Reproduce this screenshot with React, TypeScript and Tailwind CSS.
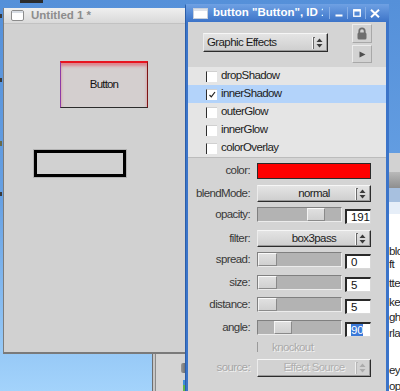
import React from "react";

const UI = "font-['Liberation_Sans',Arial,sans-serif] tracking-[-0.6px]";
const TITLE = "font-['Liberation_Sans',sans-serif] font-bold text-[11.5px] tracking-normal";

function Arrows({ disabled = false }: { disabled?: boolean }) {
  const c = disabled ? "#ababab" : "#3a3a3a";
  return (
    <svg width="15" height="14" viewBox="0 0 15 14" className="shrink-0">
      <line x1="0.5" y1="1" x2="0.5" y2="13" stroke={disabled ? "#f0f0f0" : "#fafafa"} />
      <line x1="1.5" y1="1" x2="1.5" y2="13" stroke={disabled ? "#b8b8b8" : "#6a6a6a"} />
      <line x1="1.5" y1="1.5" x2="3" y2="1.5" stroke={disabled ? "#b8b8b8" : "#6a6a6a"} />
      <path d="M4.5 6 L7.5 2.5 L10.5 6 Z" fill={c} />
      <path d="M4.5 8 L7.5 11.5 L10.5 8 Z" fill={c} />
    </svg>
  );
}

function Combo({
  text,
  className,
  left = false,
  disabled = false,
}: {
  text: string;
  className: string;
  left?: boolean;
  disabled?: boolean;
}) {
  return (
    <div
      className={`flex items-center border border-t-[#f6f6f6] border-l-[#ececec] border-r-[#2c2c2c] border-b-[#2c2c2c] shadow-[inset_-1px_-1px_0_#9a9a9a] ${
        disabled ? "bg-[#d2d2d2]" : "bg-gradient-to-b from-[#e4e4e4] to-[#cecece]"
      } ${className}`}
    >
      {left ? null : <div className="w-[15px] shrink-0" />}
      <div
        className={`flex-1 text-[11.5px] leading-none whitespace-nowrap ${left ? "pl-[3px]" : "text-center"} ${
          disabled ? "text-[#b0b0b0] [text-shadow:1px_1px_0_#f4f4f4]" : "text-[#1c1c1c]"
        }`}
      >
        {text}
      </div>
      <Arrows disabled={disabled} />
    </div>
  );
}

function Slider({ thumb }: { thumb: string }) {
  return (
    <div className="flex w-[85px] h-[15px] bg-[#b3b3b3] border border-t-[#808080] border-l-[#808080] border-r-[#ececec] border-b-[#ececec]">
      <div
        className={`${thumb} h-full bg-gradient-to-b from-[#e0e0e0] to-[#d0d0d0] border border-t-[#fafafa] border-l-[#f4f4f4] border-r-[#8a8a8a] border-b-[#8a8a8a]`}
      />
    </div>
  );
}

function NumBox({ children }: { children: React.ReactNode }) {
  return (
    <div className="mt-[2px] ml-[3px] w-[26px] h-[15px] bg-white border-t-2 border-l-2 border-t-[#2a2a2a] border-l-[#2a2a2a] border-r border-b border-r-[#d8d8d8] border-b-[#d8d8d8] pl-[4px] text-[11.5px] leading-[13px] text-[#111] tracking-[-0.2px]">
      {children}
    </div>
  );
}

function Row({
  label,
  h,
  mt,
  ch,
  disabled = false,
  children,
}: {
  label: string;
  h: string;
  mt: string;
  ch: string;
  disabled?: boolean;
  children: React.ReactNode;
}) {
  return (
    <div className={`flex items-start ${h}`}>
      <div
        className={`w-[62px] ${mt} ${ch} flex items-center justify-end text-[11.5px] leading-none whitespace-nowrap ${
          disabled ? "text-[#a6a6a6] [text-shadow:1px_1px_0_#f2f2f2]" : "text-[#383838]"
        }`}
      >
        {label}
      </div>
      <div className={`ml-[7px] ${mt} flex items-start`}>{children}</div>
    </div>
  );
}

function ListRow({ label, checked = false, selected = false }: { label: string; checked?: boolean; selected?: boolean }) {
  return (
    <div className={`h-[18px] flex items-center ${selected ? "bg-[#b3d3fa]" : ""}`}>
      <div className="ml-[18px] w-[11px] h-[11px] bg-white border-l border-l-[#2e2e2e] border-t border-t-[#d0d0d0] flex items-center justify-center">
        {checked ? (
          <svg width="9" height="9" viewBox="0 0 9 9">
            <path d="M1.5 5 L3.3 6.8 L7 2" fill="none" stroke="#222" strokeWidth="1.2" />
          </svg>
        ) : null}
      </div>
      <div className="ml-[4px] text-[11.5px] leading-none text-[#1c1c1c]">{label}</div>
    </div>
  );
}

export default function App() {
  return (
    <div
      className={`relative w-[400px] h-[391px] overflow-hidden bg-gradient-to-b from-[#5590d9] via-[#66a0e3] to-[#a3d3fb] ${UI}`}
    >
      {/* desktop bits */}
      <div className="absolute left-[20px] top-0 w-[23px] h-[3px] bg-[#2c2c2c]" />
      <div className="absolute left-0 top-[14px] w-[2px] h-[4px] bg-[#3a3a3a]" />
      <div className="absolute left-0 top-[78px] w-[2px] h-[4px] bg-[#3a3a3a]" />
      <div className="absolute left-0 top-[141px] w-[2px] h-[5px] bg-[#6a6a4a]" />
      <div className="absolute left-0 top-[192px] w-[2px] h-[4px] bg-[#3a3a3a]" />

      {/* background window at right */}
      <div className="absolute left-[388px] top-[153px] w-[12px] h-[250px] overflow-hidden flex flex-col bg-white">
        <div className="h-[19px] shrink-0 bg-[#d2d2d2]" />
        <div className="h-[16px] shrink-0 bg-gradient-to-b from-[#b9b9b9] to-[#8e8e8e]" />
        <div className="h-[14px] shrink-0 bg-[#a7c0df]" />
        <div className="h-[12px] shrink-0 bg-[#e6eef8]" />
        <div className="flex flex-col pl-[1px] text-[11.5px] leading-[13px] text-[#1e1e1e] whitespace-nowrap">
          <div className="mt-[31px]">blo</div>
          <div>ft</div>
          <div className="mt-[6px]">tte</div>
          <div className="mt-[6px]">kel</div>
          <div className="mt-[2px]">gh</div>
          <div className="mt-[3px]">rla</div>
          <div className="mt-[24px]">eys</div>
          <div className="mt-[3px]">op</div>
        </div>
      </div>

      {/* background window bottom-left */}
      <div className="absolute left-[152px] top-[354px] w-[34px] h-[40px] flex border-l border-l-[#6e6e6e]">
        <div className="w-[2px] h-full bg-[#c6c6c6]" />
        <div className="w-[1px] h-full bg-[#8a8a8a]" />
        <div className="flex-1 h-full bg-[#d4d4d4] flex flex-col items-end">
          <div className="mt-[9px] w-[5px] h-[10px] rounded-l-[2px] bg-gradient-to-r from-[#9a9a9a] to-[#6a6a6a]" />
          <div className="mt-[7px] w-[3px] h-[5px] bg-[#3d8fd9]" />
          <div className="w-[3px] h-[6px] bg-[#5db54a]" />
        </div>
      </div>

      {/* left window: Untitled 1 */}
      <div className="absolute left-[3px] top-[8px] w-[183px] h-[346px] flex flex-col bg-[#d1d1d1] border-l border-l-[#7c7c7c] border-b-2 border-b-[#7a7a7a]">
        <div className="h-[16px] shrink-0 flex items-center bg-gradient-to-b from-[#efefef] to-[#d9d9d9] border-b border-b-[#c2c2c2]">
          <div className="ml-[7px] w-[13px] h-[11px] rounded-[2px] border border-[#8c8c8c] bg-white flex flex-col">
            <div className="h-[2px] bg-[#d8dde4]" />
          </div>
          <div className={`ml-[7px] text-[#8d8d8d] ${TITLE}`}>Untitled 1 *</div>
        </div>
        <div className="relative flex-1">
          <div className="absolute left-[56px] top-[37px] w-[88px] h-[47px] flex items-center justify-center bg-[#d4cfcf] border-t-2 border-t-[#e8141f] border-l border-l-[#8c3aa6] border-r border-r-[#7c1414] border-b border-b-[#2c2c2c] shadow-[inset_0_3px_3px_rgba(232,40,60,0.45)]">
            <span className="text-[11.5px] leading-none text-[#141414] tracking-[-0.8px]">Button</span>
          </div>
          <div className="absolute left-[30px] top-[126px] w-[92px] h-[27px] border-[3px] border-black shadow-[0_0_0_1px_#b2b2b2]" />
        </div>
      </div>

      {/* right window: button properties */}
      <div className="absolute left-[185px] top-[4px] w-[204px] h-[400px] flex flex-col bg-[#3b74c9] border-l border-l-[#2c5ea8] rounded-tl-[2px] rounded-tr-[2px]">
        <div className="h-[18px] shrink-0 flex items-center bg-gradient-to-b from-[#6fa1e3] to-[#3c74c8]">
          <div className="ml-[7px] w-[15px] h-[11px] bg-white border border-[#c8d0dc] flex flex-col">
            <div className="h-[2px] bg-[#dfe3ea]" />
          </div>
          <div className={`ml-[5px] w-[110px] overflow-hidden whitespace-nowrap text-white ${TITLE}`}>
            button "Button", ID 11
          </div>
          <div className="ml-[6px] w-[1px] h-[12px] bg-[#86aee6]" />
          <div className="w-[17px] h-[18px] flex items-center justify-center">
            <svg width="8" height="10" viewBox="0 0 8 10">
              <rect x="0.5" y="6.5" width="7" height="2" fill="#fff" />
            </svg>
          </div>
          <div className="w-[1px] h-[12px] bg-[#86aee6]" />
          <div className="w-[17px] h-[18px] flex items-center justify-center">
            <svg width="8" height="8" viewBox="0 0 8 8">
              <rect x="0.75" y="0.75" width="6.5" height="6.5" fill="none" stroke="#fff" strokeWidth="1.3" />
              <rect x="0.5" y="0.5" width="7" height="2" fill="#fff" />
            </svg>
          </div>
          <div className="w-[1px] h-[12px] bg-[#86aee6]" />
          <div className="w-[17px] h-[18px] flex items-center justify-center">
            <svg width="10" height="9" viewBox="0 0 10 9">
              <path d="M1 0.8 L9 8.2 M9 0.8 L1 8.2" stroke="#fff" strokeWidth="2" />
            </svg>
          </div>
        </div>

        <div className="ml-[2px] mr-[3px] flex-1 bg-[#d4d4d4] flex flex-col">
          {/* top: combo + buttons */}
          <div className="h-[45px] shrink-0 flex items-start">
            <Combo text="Graphic Effects" left className="ml-[15px] mt-[11px] w-[125px] h-[19px]" />
            <div className="ml-[24px] mt-[2px] flex flex-col gap-[2px]">
              <div className="w-[20px] h-[19px] flex items-center justify-center border border-t-[#ececec] border-l-[#ececec] border-r-[#a8a8a8] border-b-[#a8a8a8] bg-[#d2d2d2]">
                <svg width="10" height="13" viewBox="0 0 10 13">
                  <path d="M2.3 6 V4 a2.7 2.7 0 0 1 5.4 0 V6" fill="none" stroke="#6e6e6e" strokeWidth="1.8" />
                  <rect x="0.5" y="5.5" width="9" height="7" rx="1.5" fill="#6e6e6e" />
                </svg>
              </div>
              <div className="w-[20px] h-[18px] flex items-center justify-center border border-t-[#ececec] border-l-[#ececec] border-r-[#a8a8a8] border-b-[#a8a8a8] bg-[#d2d2d2]">
                <svg width="7" height="7" viewBox="0 0 7 7">
                  <path d="M0.5 0.5 L6.5 3.5 L0.5 6.5 Z" fill="#4e4e4e" />
                </svg>
              </div>
            </div>
          </div>

          {/* effects list */}
          <div className="h-[91px] shrink-0 flex flex-col bg-[#e5e5e5] border-b border-b-[#bcbcbc]">
            <ListRow label="dropShadow" />
            <ListRow label="innerShadow" checked selected />
            <ListRow label="outerGlow" />
            <ListRow label="innerGlow" />
            <ListRow label="colorOverlay" />
          </div>

          {/* properties form */}
          <div className="pt-[2px] flex flex-col">
            <Row label="color:" h="h-[22px]" mt="mt-[3px]" ch="h-[16px]">
              <div className="w-[114px] h-[16px] bg-[#ff0000] border border-[#2a2a2a]" />
            </Row>
            <Row label="blendMode:" h="h-[23px]" mt="mt-[3px]" ch="h-[17px]">
              <Combo text="normal" className="w-[114px] h-[17px]" />
            </Row>
            <Row label="opacity:" h="h-[23px]" mt="mt-[2px]" ch="h-[15px]">
              <Slider thumb="ml-[49px] w-[18px]" />
              <NumBox>191</NumBox>
            </Row>
            <Row label="filter:" h="h-[22px]" mt="mt-[2px]" ch="h-[17px]">
              <Combo text="box3pass" className="w-[114px] h-[17px]" />
            </Row>
            <Row label="spread:" h="h-[23px]" mt="mt-[2px]" ch="h-[15px]">
              <Slider thumb="ml-0 w-[19px]" />
              <NumBox>0</NumBox>
            </Row>
            <Row label="size:" h="h-[22px]" mt="mt-[2px]" ch="h-[15px]">
              <Slider thumb="ml-0 w-[19px]" />
              <NumBox>5</NumBox>
            </Row>
            <Row label="distance:" h="h-[23px]" mt="mt-[2px]" ch="h-[15px]">
              <Slider thumb="ml-0 w-[19px]" />
              <NumBox>5</NumBox>
            </Row>
            <Row label="angle:" h="h-[22px]" mt="mt-[2px]" ch="h-[15px]">
              <Slider thumb="ml-[16px] w-[18px]" />
              <NumBox>
                <span className="bg-[#3a78d8] text-white">90</span>
              </NumBox>
            </Row>
            <div className="h-[15px] flex items-start">
              <div className="ml-[69px] mt-[2px] w-[11px] h-[10px] border-l border-l-[#9a9a9a]" />
              <div className="ml-[4px] mt-[1px] text-[11.5px] leading-[12px] text-[#aaaaaa] [text-shadow:1px_1px_0_#f2f2f2]">
                knockout
              </div>
            </div>
            <Row label="source:" h="h-[30px]" mt="mt-[4px]" ch="h-[18px]" disabled>
              <Combo text="Effect Source" disabled className="w-[114px] h-[18px]" />
            </Row>
          </div>
        </div>
      </div>
    </div>
  );
}
